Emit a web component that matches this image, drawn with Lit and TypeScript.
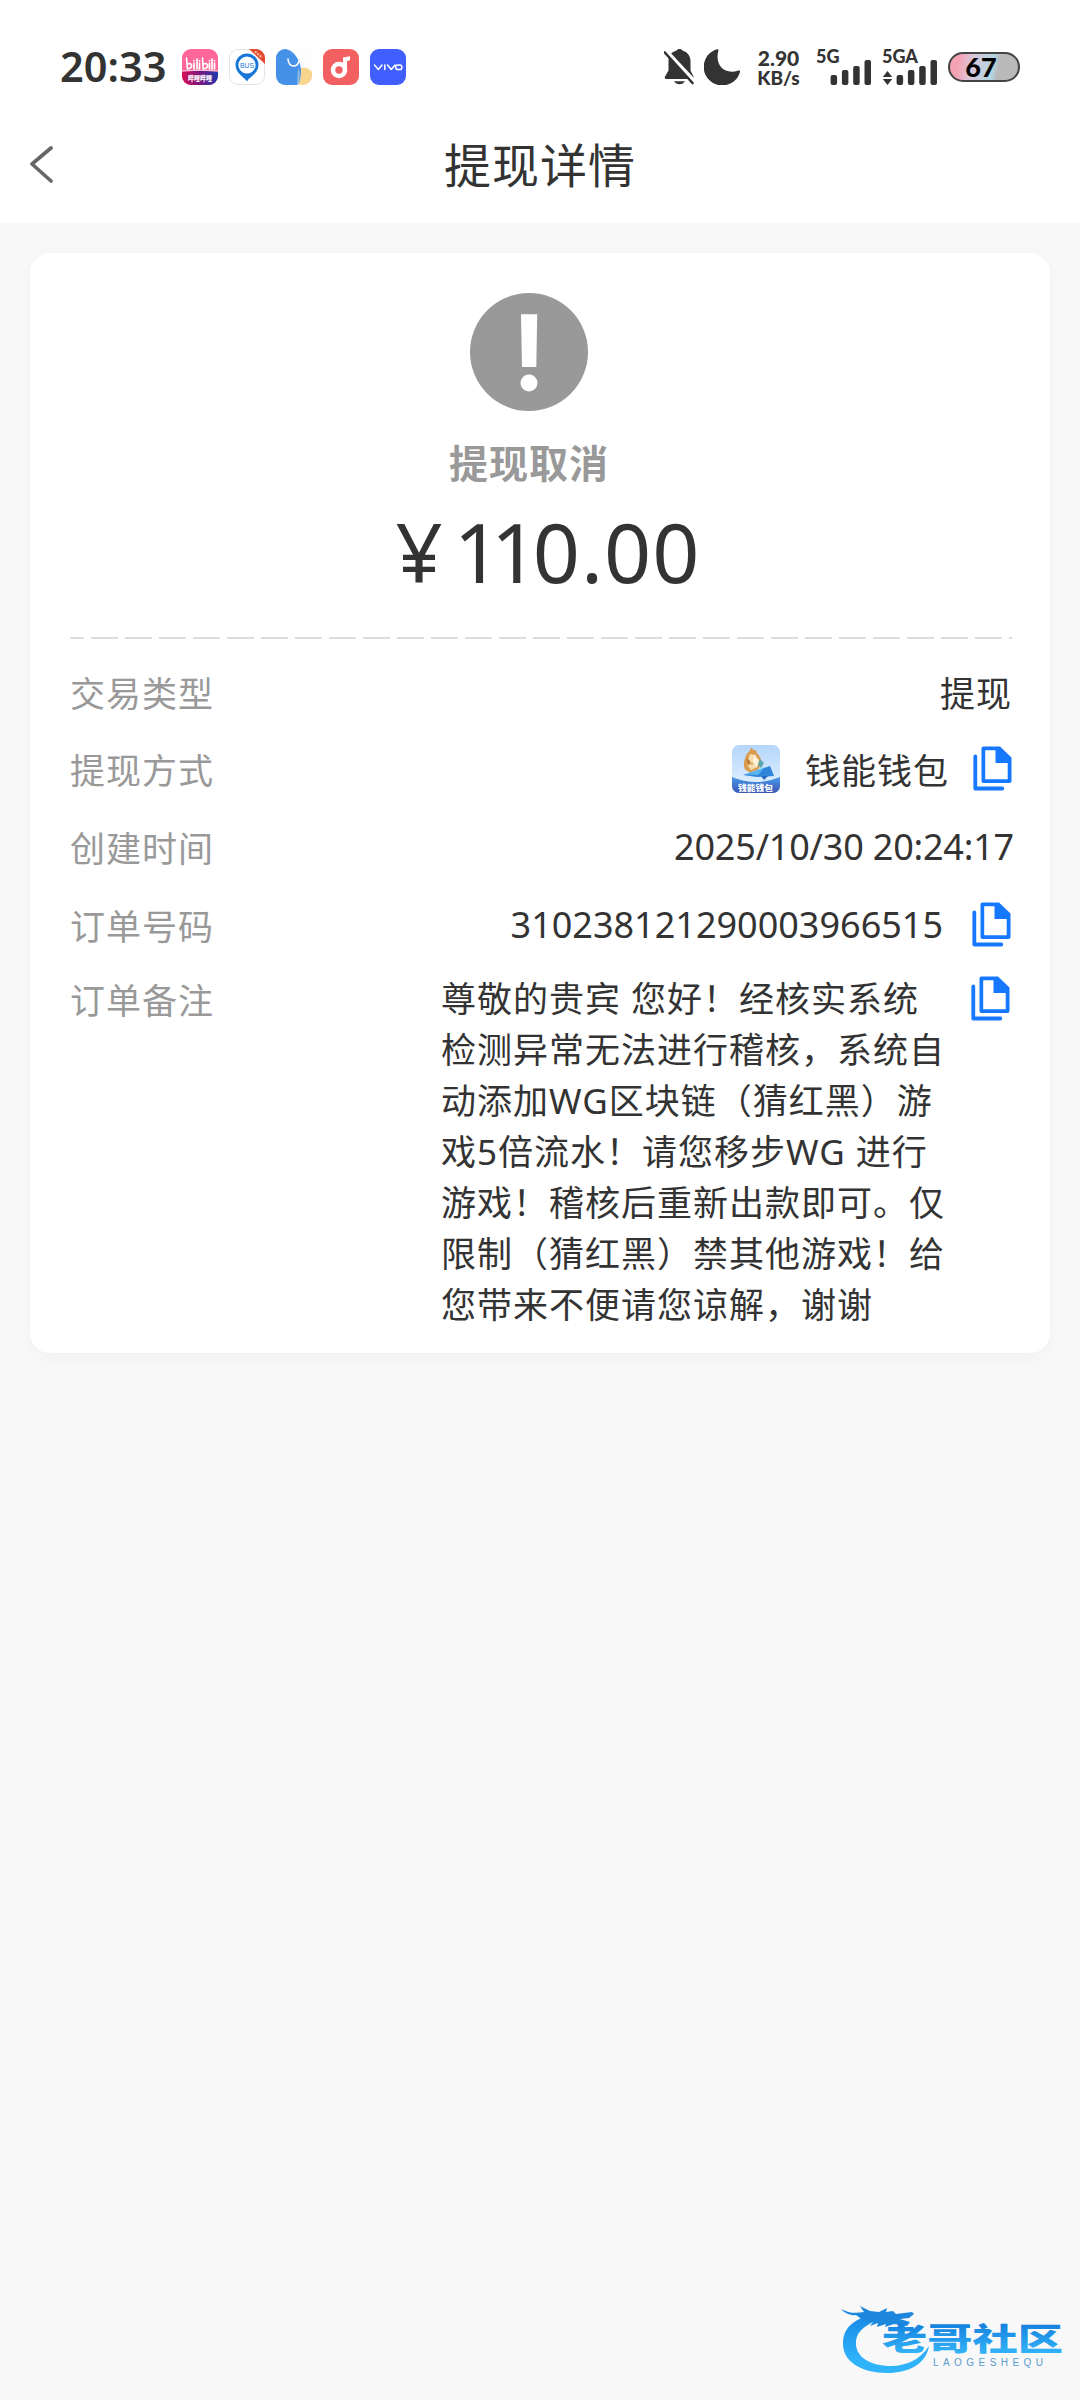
import { css, html, LitElement, svg } from 'lit';
import { customElement, property } from 'lit/decorators.js';

const CopyIcon = html`<svg viewBox="0 0 39 45" width="39" height="45">
  <path
    fill="#1677ff"
    fill-rule="evenodd"
    d="M10.5 0.5h16.5L38.5 11.5v23.5a2 2 0 0 1-2 2h-26a2 2 0 0 1-2-2v-32.500a2 2 0 0 1 2-2zM12.200 4.300v28.900h22.500V17H22.500V4.300z"
  />
  <path
    d="M2.300 10.500v32h27"
    fill="none"
    stroke="#1677ff"
    stroke-width="3.800"
    stroke-linecap="round"
    stroke-linejoin="round"
  />
</svg>`;

const WalletIcon = html`<svg viewBox="0 0 48 48" width="48" height="48">
  <defs>
    <linearGradient id="sky" x1="0" y1="0" x2="0" y2="1">
      <stop offset="0" stop-color="#b4d6fb" />
      <stop offset="1" stop-color="#e8f4ff" />
    </linearGradient>
    <linearGradient id="sea" x1="0" y1="0" x2="0" y2="1">
      <stop offset="0" stop-color="#4a9bea" />
      <stop offset="1" stop-color="#3a55b4" />
    </linearGradient>
    <clipPath id="wallet"><rect width="48" height="48" rx="7" /></clipPath>
  </defs>
  <g clip-path="url(#wallet)">
    <rect width="48" height="48" fill="url(#sky)" />
    <path
      d="M19 2.500l2 2 3 1 1 3c4 3 4 7 5 10l-4 6-8 3-5-3c-2-5-1-8 0-11 1-4 3-6 5-8z"
      fill="#d99b4e"
    />
    <path d="M18 9l6 1 1 5-5 3-4-3zM15 20l6-1 4 3-6 3z" fill="#f6dcae" />
    <path d="M22 10l5 5-2 8-4-5z" fill="#fff3dc" />
    <path d="M15 13l3 3-2 5z" fill="#b8732d" />
    <path d="M28 14l4 4-3 5-3-3z" fill="#5aa7ae" />
    <path d="M11 30L38 21l4 10-17 1z" fill="#2f86d8" />
    <path d="M14 29.500L33 22l-7 8z" fill="#55b5ee" />
    <path d="M29 31h7l-4 4z" fill="#2467bd" />
    <path d="M0 32q24 10 48 0v16H0z" fill="url(#sea)" />
    <text
      x="23.500"
      y="45.500"
      text-anchor="middle"
      textLength="35"
      lengthAdjust="spacingAndGlyphs"
      class="tiny"
      font-size="7.500"
      fill="#fff"
    >钱能钱包</text>
  </g>
</svg>`;

const BiliIcon = html`<svg viewBox="0 0 36 36" width="36" height="36">
  <defs>
    <clipPath id="bili"><rect width="36" height="36" rx="9" /></clipPath>
    <linearGradient id="band">
      <stop offset="0" stop-color="#d80f55" />
      <stop offset="0.500" stop-color="#7a1680" />
      <stop offset="1" stop-color="#1c3bb0" />
    </linearGradient>
  </defs>
  <g clip-path="url(#bili)">
    <rect width="36" height="36" fill="#ff6699" />
    <path d="M0 22.500q18-1.500 36 0V36H0z" fill="url(#band)" />
    <path d="M0 22q18-1.500 36 0" stroke="#ffd3e2" stroke-width="1" fill="none" />
    <g fill="none" stroke="#fff" stroke-width="1.700" stroke-linecap="round">
      <path d="M4.500 9l1 11M5.500 15c5-2 6 4 0 5M12 14v6M15 10v10M17.500 14v6M12 11.500v.2M17.500 11.500v.2" />
      <path d="M20.500 9l.7 11M21.500 15c5-2 6 4 0 5M27.500 14v6M30 10v10M32.500 14v6M27.500 11.500v.2M32.500 11.500v.2" />
    </g>
    <text
      x="18"
      y="31.500"
      text-anchor="middle"
      textLength="24"
      lengthAdjust="spacingAndGlyphs"
      class="tiny"
      font-size="6.500"
      fill="#fff"
    >哔哩哔哩</text>
  </g>
</svg>`;

const BusIcon = html`<svg viewBox="0 0 36 36" width="36" height="36">
  <defs>
    <clipPath id="bus"><rect width="36" height="36" rx="9" /></clipPath>
  </defs>
  <rect x="0.500" y="0.500" width="35" height="35" rx="8.500" fill="#fff" stroke="#e4e4e4" />
  <path
    d="M18 32.500c-2-4-11.500-8-11.500-16.500a11.500 11.500 0 0 1 23 0c0 8.500-9.500 12.500-11.500 16.500z"
    fill="#1877d8"
  />
  <circle cx="18" cy="16" r="8.600" fill="#fff" />
  <text
    x="18"
    y="18.700"
    text-anchor="middle"
    textLength="14"
    lengthAdjust="spacingAndGlyphs"
    class="bus"
    font-size="7.500"
  >BUS</text>
  <path d="M20 0h16v15z" fill="#e2492f" clip-path="url(#bus)" />
  <path d="M26 2.500l7 6" stroke="#f6c3a0" stroke-width="2" stroke-dasharray="2 1" />
</svg>`;

const BlobIcon = html`<svg viewBox="0 0 36 36" width="36" height="36">
  <defs>
    <clipPath id="blob"><rect width="36" height="36" rx="9" /></clipPath>
  </defs>
  <g clip-path="url(#blob)">
    <rect width="36" height="36" fill="#fdfdfd" />
    <circle cx="28" cy="27.500" r="9" fill="#f8d58c" />
    <path d="M0 0h10c9 2 15 13 15 22 0 6-1 10-3 14H0z" fill="#4691e8" />
    <path d="M22 19c3 5 2 12 0 17h-1z" fill="#8ebbe0" />
    <path
      d="M12 10c1 9 9 9 11 2"
      fill="none"
      stroke="#fff"
      stroke-width="1.600"
      stroke-linecap="round"
    />
  </g>
</svg>`;

const MusicIcon = html`<svg viewBox="0 0 36 36" width="36" height="36">
  <rect width="36" height="36" rx="9" fill="#f26062" />
  <circle cx="16" cy="21" r="6" fill="none" stroke="#fff" stroke-width="4.600" />
  <path d="M20 21V8.500l7-1.200v4l-3 .6V21z" fill="#fff" />
</svg>`;

const VivoIcon = html`<svg viewBox="0 0 36 36" width="36" height="36">
  <rect width="36" height="36" rx="9" fill="#415fff" />
  <g fill="none" stroke="#fff" stroke-width="1.500" stroke-linecap="round" stroke-linejoin="round">
    <path d="M4.500 16l3.800 4.500L12 16M14.800 16v4.500M17.500 16l3.800 4.500L25 16" />
    <rect x="25.800" y="16" width="6" height="4.500" rx="1.800" />
  </g>
</svg>`;

const MuteIcon = html`<svg viewBox="0 0 30 36" width="30" height="36">
  <path
    d="M15.500 0c1.500 0 2.500.6 3 1.500 5 1.500 8 5.500 8 10.500v9.500l3 6q.5 2.500-2 2.500H2.500Q0 30 1 27.500l3.500-6V12C4.500 6.500 7.500 3 12.500 1.500 13 .6 14 0 15.500 0z"
    fill="#333"
  />
  <path d="M10 32.300h11q-2 3-5.500 3T10 32.300z" fill="#333" />
  <path d="M2 1.500l28 30" stroke="#fff" stroke-width="3.500" />
  <path d="M.8 3.500l27.700 30.500" stroke="#333" stroke-width="2.600" stroke-linecap="round" />
</svg>`;

const MoonIcon = html`<svg viewBox="0 0 36 36" width="36" height="36">
  <path
    d="M13 .2Q14.800 0 14.400 1.800C10.500 15.500 20 26.500 34.500 21.500Q36.500 21 36 23A18.500 18.500 0 1 1 13 .2z"
    fill="#333"
  />
</svg>`;

const BackIcon = html`<svg viewBox="0 0 26 38" width="26" height="38">
  <path
    d="M23 2L4 18l19 17"
    fill="none"
    stroke="#666"
    stroke-width="3.600"
    stroke-linecap="round"
    stroke-linejoin="round"
  />
</svg>`;

const CancelIcon = html`<svg viewBox="0 0 118 118" width="118" height="118">
  <circle cx="59" cy="59" r="59" fill="#999" />
  <path d="M51 21.300h16.200L66.300 74H52z" fill="#fff" />
  <circle cx="59" cy="90" r="8.500" fill="#fff" />
</svg>`;

const Watermark = html`<svg viewBox="0 0 224 72" width="224" height="72">
  <defs>
    <linearGradient id="wm" x1="0" y1="0" x2="0" y2="72" gradientUnits="userSpaceOnUse">
      <stop offset="0.100" stop-color="#1686e6" />
      <stop offset="0.800" stop-color="#2fb4fb" />
    </linearGradient>
    <linearGradient id="wmText" x1="0" y1="0" x2="0" y2="1">
      <stop offset="0.200" stop-color="#1480de" />
      <stop offset="0.900" stop-color="#35b5f8" />
    </linearGradient>
  </defs>
  <path
    d="M34 10C10 16 3 26 3 40c0 18 19 29 44 29 22 0 39-9 42-27-9 14-23 20-38 20-21 0-34-9-35-21-1-11 6-19 22-25z"
    fill="url(#wm)"
  />
  <path
    d="M1 5c9 5 16 4 23 3l-4-6 10 5 9 1 8-4-1 4 7-1 3 3 8-1 8-1 2 2-5 4-9 1 10 3-3 4-13-2-9 3 1-3-9 3 1-4-8 3 3-4-9-1-8-6C13 12 5 10 1 5z"
    fill="#1d87de"
  />
  <text
    x="42"
    y="46"
    class="wm-name"
    font-size="31"
    textLength="181"
    lengthAdjust="spacingAndGlyphs"
    fill="url(#wmText)"
  >老哥社区</text>
  <text x="93" y="62" class="wm-latin" font-size="10" textLength="110">LAOGESHEQU</text>
</svg>`;

@customElement('signal-bars')
export class SignalBars extends LitElement {
  static styles = css`
    :host {
      display: flex;
      flex-direction: column;
      height: 36px;
      font: 900 18px/18px Lato, 'Noto Sans', sans-serif;
      color: #333;
    }

    .name {
      height: 11px;
      line-height: 14px;
      white-space: nowrap;
    }

    .bars {
      display: block;
      align-self: flex-end;
    }
  `;

  @property()
  label = '';

  @property({ type: Boolean })
  traffic = false;

  override render() {
    return html`<span class="name">${this.label}</span>
      <svg class="bars" viewBox="0 0 55 25" width="55" height="25">
        ${this.traffic
          ? svg`<path d="M5.500 11l4.700 6H.8zM5.500 25l4.700-6H.8z" fill="#333" />`
          : ''}
        ${[10, 15, 19, 25].map(
          (h, i) => svg`<rect x=${14.6 + i * 11.3} y=${25 - h} width="6.500" height=${h}
            rx="2" fill="#333" />`
        )}
      </svg>`;
  }
}

@customElement('detail-row')
export class DetailRow extends LitElement {
  static styles = css`
    :host {
      box-sizing: border-box;
      display: flex;
      justify-content: space-between;
      align-items: center;
      height: 77px;
      padding-bottom: 2px;
    }

    .label {
      color: #999;
    }

    .value {
      display: flex;
      align-items: center;
      color: #333;
    }
  `;

  @property()
  label = '';

  override render() {
    return html`<span class="label">${this.label}</span>
      <div class="value"><slot></slot></div>`;
  }
}

@customElement('app-root')
export class AppRoot extends LitElement {
  static styles = css`
    :host {
      box-sizing: border-box;
      display: flex;
      flex-direction: column;
      width: 1080px;
      height: 2400px;
      background: #f8f8f8;
      color: #333;
      font-family: 'Noto Sans', 'Noto Sans CJK SC', sans-serif;
      font-size: 35px;
      letter-spacing: 1px;
    }

    svg {
      display: block;
      flex: none;
      letter-spacing: 0;
    }

    .status {
      box-sizing: border-box;
      display: flex;
      align-items: center;
      height: 120px;
      padding: 14px 60px 0 60px;
      background: #fff;
      letter-spacing: 0;
    }

    .clock {
      width: 122px;
      font-size: 41.5px;
      line-height: 56px;
      font-weight: 600;
      padding-bottom: 2px;
    }

    .apps {
      display: flex;
      gap: 11px;
      margin-right: auto;
    }

    .system {
      display: flex;
      align-items: center;
    }

    .moon {
      margin: 0 15px 0 10px;
    }

    .speed {
      width: 47px;
      font: 900 21px/21px Lato, 'Noto Sans', sans-serif;
      text-align: center;
      white-space: nowrap;
    }

    .unit {
      font-size: 19px;
      line-height: 19px;
    }

    .sim1 {
      margin-left: 14px;
    }

    .sim2 {
      margin-left: 11px;
    }

    .battery {
      box-sizing: border-box;
      width: 72px;
      height: 30px;
      margin-left: 11px;
      padding-right: 6px;
      border: 2px solid #444;
      border-radius: 15px;
      background: linear-gradient(100deg, #f5a3b4 14%, #d9c6da 32%, #b3d6e0 62%, #b9b9b9 70%);
      color: #000;
      font: 900 27px/25px Lato, 'Noto Sans', sans-serif;
      text-align: center;
    }

    .nav {
      box-sizing: border-box;
      display: grid;
      grid-template-columns: 60px 1fr 60px;
      align-items: center;
      height: 103px;
      padding: 0 28px 14px;
      background: #fff;
    }

    .title {
      font-size: 47px;
      line-height: 72px;
      text-align: center;
    }

    .card {
      box-sizing: border-box;
      height: 1100px;
      margin: 30px 30px 0;
      padding: 40px 38px 0 40px;
      border-radius: 20px;
      background: #fff;
      box-shadow: 0 4px 16px rgba(0, 0, 0, 0.03);
    }

    .result {
      display: flex;
      flex-direction: column;
      align-items: center;
      height: 344px;
      padding-right: 24px;
    }

    .state {
      margin-top: 22px;
      color: #999;
      font-size: 39px;
      line-height: 60px;
      font-weight: 700;
    }

    .amount {
      display: flex;
      align-items: baseline;
      gap: 10px;
      margin: 8px -38px 0 0;
      font-size: 82.5px;
      line-height: 100px;
    }

    .one {
      letter-spacing: -10px;
    }

    .one + .one {
      letter-spacing: -5.5px;
    }

    .divider {
      height: 2px;
      margin: 0 0 15px;
      background: repeating-linear-gradient(90deg, #ddd 0 27px, transparent 27px 34px) -13px 0 /
        calc(100% + 13px) 2px;
    }

    .wallet {
      margin-right: 25px;
    }

    .copy {
      margin-left: 24px;
    }

    .date {
      margin-right: -2px;
      font-size: 36px;
      letter-spacing: -0.2px;
    }

    .number {
      font-size: 36px;
      letter-spacing: 0;
    }

    .number-copy {
      margin-right: 1px;
      margin-left: 29px;
    }

    .tall {
      height: 79px;
    }

    .remark {
      display: grid;
      grid-template-columns: 371px 1fr auto;
      align-items: start;
    }

    .remark-label {
      color: #999;
      line-height: 74px;
    }

    .remark-text {
      padding-top: 9px;
      line-height: 51px;
      white-space: nowrap;
    }

    .remark-copy {
      margin-right: 2px;
      padding-top: 12px;
    }

    .watermark {
      margin: auto 16px 24px auto;
    }

    .tiny {
      font-family: 'Noto Sans CJK SC', sans-serif;
      font-weight: 900;
    }

    .bus {
      font-family: 'Liberation Sans', sans-serif;
      fill: #1877d8;
    }

    .wm-name {
      font-family: 'Noto Sans CJK SC', sans-serif;
      font-weight: 900;
    }

    .wm-latin {
      font-family: 'Liberation Sans', sans-serif;
      fill: #5a9bd0;
    }
  `;

  renderStatus() {
    return html`<div class="status">
      <div class="clock">20:33</div>
      <div class="apps">${BiliIcon}${BusIcon}${BlobIcon}${MusicIcon}${VivoIcon}</div>
      <div class="system">
        ${MuteIcon}
        <div class="moon">${MoonIcon}</div>
        <div class="speed">
          <div>2.90</div>
          <div class="unit">KB/s</div>
        </div>
        <signal-bars class="sim1" label="5G"></signal-bars>
        <signal-bars class="sim2" label="5GA" traffic></signal-bars>
        <div class="battery">67</div>
      </div>
    </div>`;
  }

  override render() {
    return html`${this.renderStatus()}
      <div class="nav">
        ${BackIcon}
        <div class="title">提现详情</div>
      </div>
      <div class="card">
        <div class="result">
          ${CancelIcon}
          <div class="state">提现取消</div>
          <div class="amount">
            <span>¥</span>
            <span><span class="one">1</span><span class="one">1</span>0.00</span>
          </div>
        </div>
        <div class="divider"></div>
        <detail-row label="交易类型">提现</detail-row>
        <detail-row label="提现方式">
          <div class="wallet">${WalletIcon}</div>
          钱能钱包
          <div class="copy">${CopyIcon}</div>
        </detail-row>
        <detail-row class="tall" label="创建时间">
          <span class="date">2025/10/30 20:24:17</span>
        </detail-row>
        <detail-row label="订单号码">
          <span class="number">310238121290003966515</span>
          <div class="number-copy">${CopyIcon}</div>
        </detail-row>
        <div class="remark">
          <div class="remark-label">订单备注</div>
          <div class="remark-text">
            尊敬的贵宾 您好！经核实系统<br />检测异常无法进行稽核，系统自<br />动添加WG区块链（猜红黑）游<br />戏5倍流水！请您移步WG
            进行<br />游戏！稽核后重新出款即可。仅<br />限制（猜红黑）禁其他游戏！给<br />您带来不便请您谅解，谢谢
          </div>
          <div class="remark-copy">${CopyIcon}</div>
        </div>
      </div>
      <div class="watermark">${Watermark}</div>`;
  }
}

declare global {
  interface HTMLElementTagNameMap {
    'app-root': AppRoot;
    'detail-row': DetailRow;
    'signal-bars': SignalBars;
  }
}
